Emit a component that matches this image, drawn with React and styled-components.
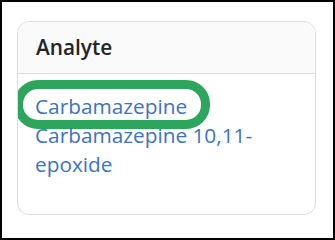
import React from 'react';
import styled, { createGlobalStyle } from 'styled-components';

const GlobalStyle = createGlobalStyle`
  html, body {
    margin: 0;
    padding: 0;
    background: #fff;
  }
  body {
    font-family: "Open Sans", "Noto Sans", sans-serif;
  }
`;

const Frame = styled.div`
  box-sizing: border-box;
  width: 100vw;
  height: 100vh;
  border: 2px solid #000;
  padding: 19px 17px 0 15px;
`;

const Card = styled.div`
  border: 1px solid #dedede;
  border-radius: 12px;
  overflow: hidden;
  background: #fff;
`;

const CardHeader = styled.div`
  background: #fafafa;
  border-bottom: 1px solid #dedede;
  padding: 11px 18px;
  font-size: 20.8px;
  line-height: 1.4;
  font-weight: 600;
  color: #212529;
`;

const CardBody = styled.div`
  display: flex;
  flex-direction: column;
  padding: 17.5px 18px 35px 17px;
`;

const Row = styled.div`
  position: relative;
  font-size: 20.8px;
  line-height: 1.4;
`;

const AnalyteLink = styled.a`
  color: #3d73c2;
  text-decoration: none;
`;

// annotation drawn over the first analyte
const Highlight = styled.span`
  position: absolute;
  left: -21px;
  top: -11.5px;
  width: 196px;
  height: 49px;
  box-sizing: border-box;
  border: 9.5px solid #2ea55c;
  border-radius: 24px;
  pointer-events: none;
`;

const analytes = [
    { name: 'Carbamazepine', highlighted: true },
    { name: 'Carbamazepine 10,11-epoxide' },
];

export default function App() {
    return (
        <>
            <GlobalStyle />
            <Frame>
                <Card>
                    <CardHeader>Analyte</CardHeader>
                    <CardBody>
                        {analytes.map(item => (
                            <Row key={item.name}>
                                <AnalyteLink href="#">{item.name}</AnalyteLink>
                                {item.highlighted && <Highlight />}
                            </Row>
                        ))}
                    </CardBody>
                </Card>
            </Frame>
        </>
    );
}
